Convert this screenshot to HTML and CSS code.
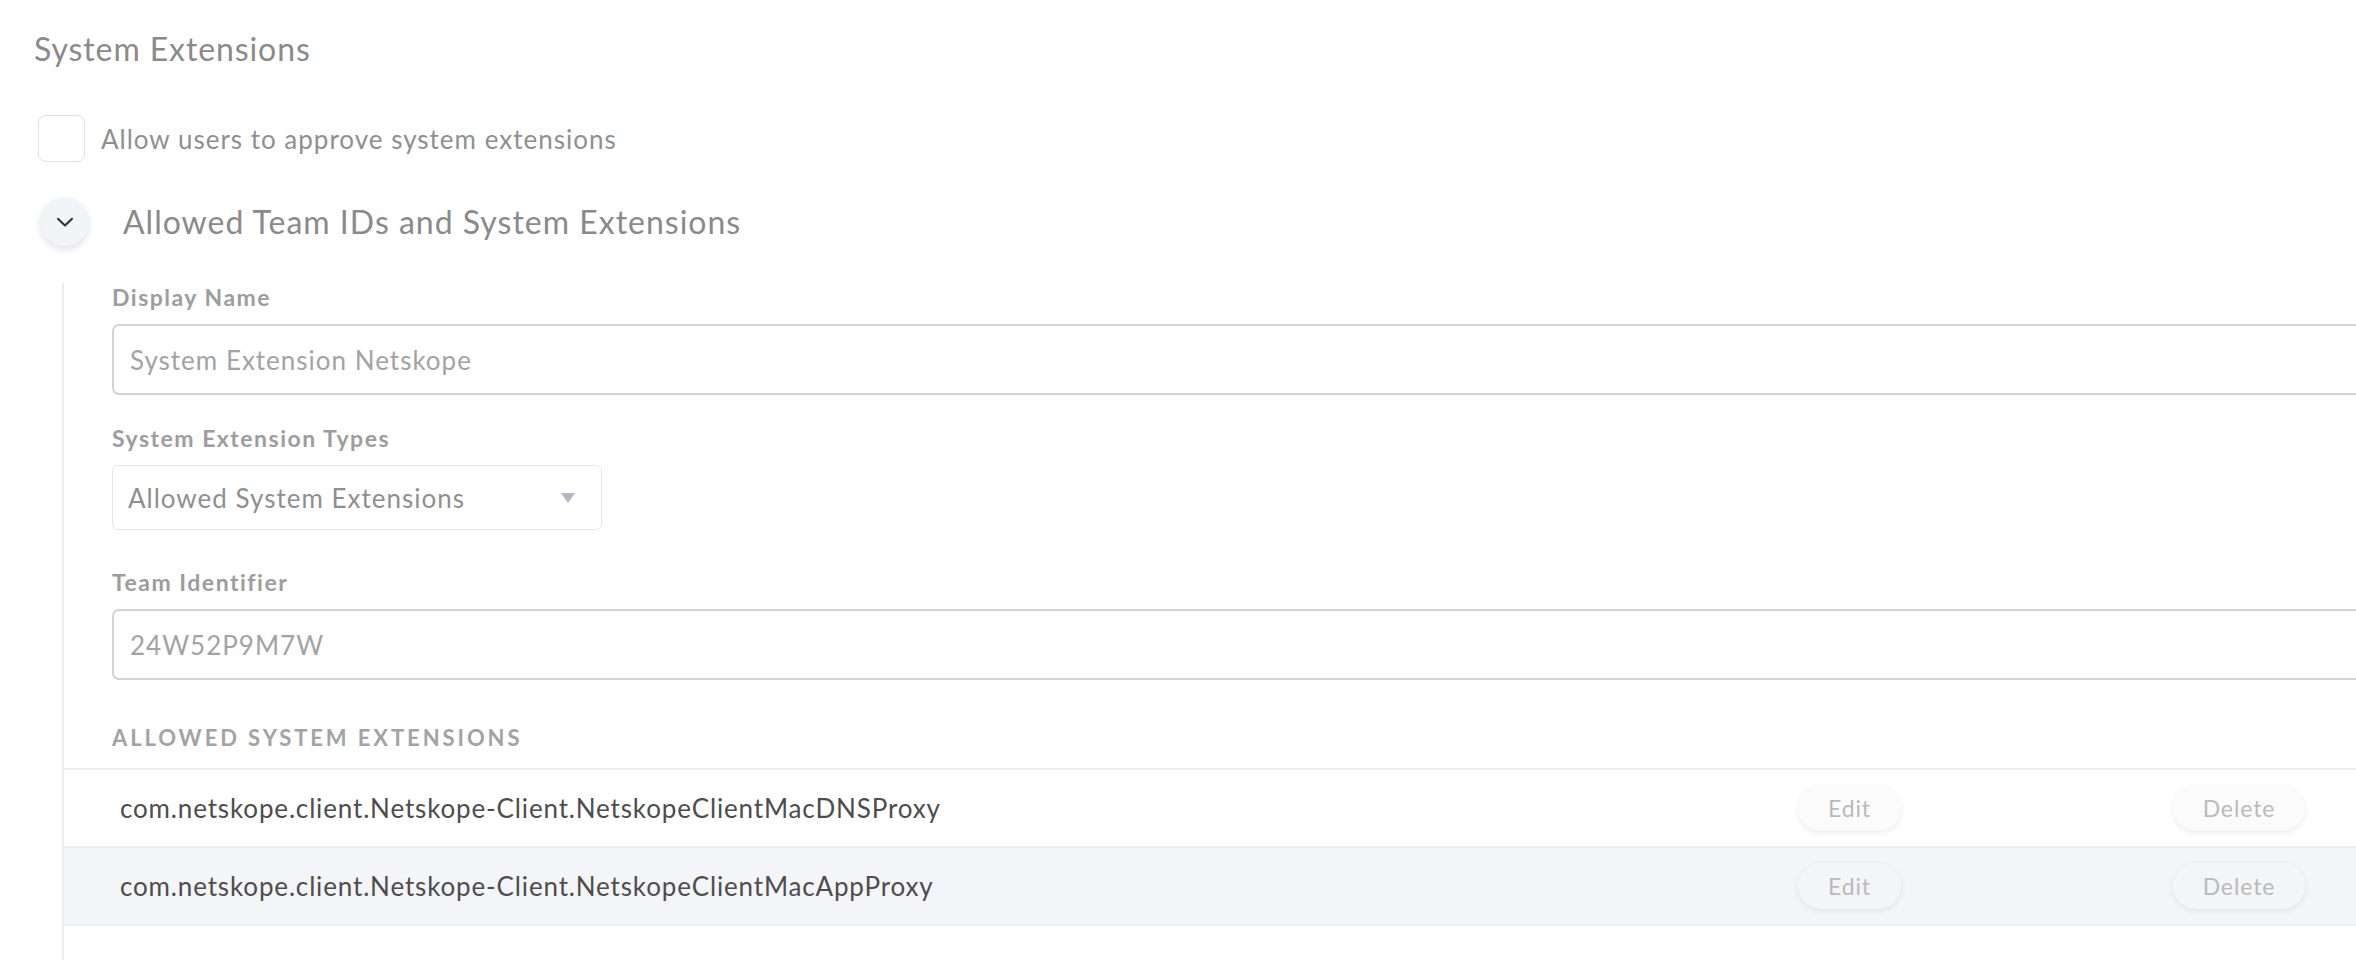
FILE: index.html
```html
<!DOCTYPE html>
<html lang="en">
<head>
  <meta charset="UTF-8">
  <title>System Extensions</title>
  <link rel="stylesheet" href="styles.css">
</head>
<body>
  <div class="page">
    <h2 class="section-title">System Extensions</h2>

    <label class="check-row">
      <span class="checkbox"></span>
      <span class="check-label">Allow users to approve system extensions</span>
    </label>

    <div class="group-head">
      <button type="button" class="collapse-btn">
        <svg width="18" height="10" viewBox="0 0 18 10">
          <path d="M2 1.8 L9 8.4 L16 1.8" fill="none" stroke="#2f3038" stroke-width="2.1" stroke-linecap="round" stroke-linejoin="round"/>
        </svg>
      </button>
      <h3 class="group-title">Allowed Team IDs and System Extensions</h3>
    </div>

    <div class="group-body">
      <div class="fields">
        <div class="field">
          <div class="field-label">Display Name</div>
          <div class="text-input">System Extension Netskope</div>
        </div>
        <div class="field field-select">
          <div class="field-label">System Extension Types</div>
          <div class="select-box">
            <span>Allowed System Extensions</span>
            <span class="caret"></span>
          </div>
        </div>
        <div class="field">
          <div class="field-label">Team Identifier</div>
          <div class="text-input">24W52P9M7W</div>
        </div>
        <div class="list-title">Allowed System Extensions</div>
      </div>

      <div class="ext-table">
        <div class="ext-row">
          <span class="ext-name">com.netskope.client.Netskope-Client.NetskopeClientMacDNSProxy</span>
          <button type="button" class="pill-btn edit-btn">Edit</button>
          <button type="button" class="pill-btn delete-btn">Delete</button>
        </div>
        <div class="ext-row alt">
          <span class="ext-name">com.netskope.client.Netskope-Client.NetskopeClientMacAppProxy</span>
          <button type="button" class="pill-btn edit-btn">Edit</button>
          <button type="button" class="pill-btn delete-btn">Delete</button>
        </div>
      </div>
    </div>
  </div>
</body>
</html>
```

FILE: styles.css
```css
body {
  margin: 0;
  background: #fff;
  font-family: 'Lato', 'Liberation Sans', sans-serif;
  color: #8c8c8c;
  overflow: hidden;
}
.page {
  padding: 29px 0 0 34px;
  height: 931px;
}
.section-title {
  margin: 0;
  font-size: 32px;
  font-weight: 400;
  line-height: 40px;
  letter-spacing: 0.9px;
  color: #8a8a8a;
}
.check-row {
  display: flex;
  align-items: center;
  margin: 46px 0 0 4px;
}
.checkbox {
  width: 45px;
  height: 45px;
  border: 1.5px solid #e0e0e0;
  border-radius: 8px;
  background: #fff;
}
.check-label {
  margin-left: 16px;
  font-size: 26px;
  letter-spacing: 1px;
  color: #8f8f8f;
}
.group-head {
  display: flex;
  align-items: center;
  margin: 35px 0 0 6px;
}
.collapse-btn {
  width: 49px;
  height: 49px;
  border: none;
  border-radius: 50%;
  background: #f3f4f8;
  box-shadow: 0 4px 7px rgba(0, 0, 0, 0.11);
  display: flex;
  align-items: center;
  justify-content: center;
  padding: 0;
}
.group-title {
  margin: 0 0 0 34px;
  font-size: 32px;
  font-weight: 400;
  letter-spacing: 1px;
  color: #8a8a8a;
}
.group-body {
  margin: 37px 0 0 28px;
  border-left: 2px solid #ececec;
  height: 700px;
}
.fields {
  padding-left: 48px;
}
.field {
  margin-bottom: 29px;
}
.field-select {
  margin-bottom: 38px;
}
.field-label {
  font-size: 23px;
  font-weight: 700;
  line-height: 28px;
  letter-spacing: 1.5px;
  color: #9d9d9d;
  margin-bottom: 13px;
}
.text-input {
  width: 2400px;
  height: 67px;
  border: 2px solid #d3d3d3;
  border-radius: 7px;
  padding-left: 16px;
  display: flex;
  align-items: center;
  font-size: 26px;
  letter-spacing: 1px;
  color: #a3a3a3;
}
.select-box {
  width: 473px;
  height: 63px;
  border: 1.5px solid #e6e6e6;
  border-radius: 6px;
  padding: 0 0 0 15px;
  display: flex;
  align-items: center;
  font-size: 26px;
  letter-spacing: 1px;
  color: #8f8f8f;
}
.caret {
  margin-left: auto;
  margin-right: 26px;
  width: 0;
  height: 0;
  border-left: 7.5px solid transparent;
  border-right: 7.5px solid transparent;
  border-top: 10px solid #b3b7c1;
}
.list-title {
  margin-top: 45px;
  font-size: 22px;
  font-weight: 700;
  line-height: 26px;
  letter-spacing: 2.9px;
  text-transform: uppercase;
  color: #a3a3a3;
}
.ext-table {
  margin-top: 17px;
  border-top: 2px solid #eceef1;
}
.ext-row {
  display: flex;
  align-items: center;
  height: 76px;
  padding: 0 51px 0 56px;
  border-bottom: 2px solid #eceef1;
}
.ext-row.alt {
  background: #f4f5f9;
}
.ext-name {
  flex: 1;
  font-size: 26px;
  letter-spacing: 0.85px;
  color: #4d4d4d;
}
.pill-btn {
  height: 46px;
  border: none;
  border-radius: 23px;
  background: #fbfbfc;
  box-shadow: 0 2px 6px rgba(0, 0, 0, 0.08);
  font-family: inherit;
  font-size: 23px;
  letter-spacing: 0.9px;
  color: #bababa;
  padding: 0;
}
.alt .pill-btn {
  background: #f4f5f9;
}
.edit-btn {
  width: 103px;
}
.delete-btn {
  width: 132px;
  margin-left: 272px;
}
```
